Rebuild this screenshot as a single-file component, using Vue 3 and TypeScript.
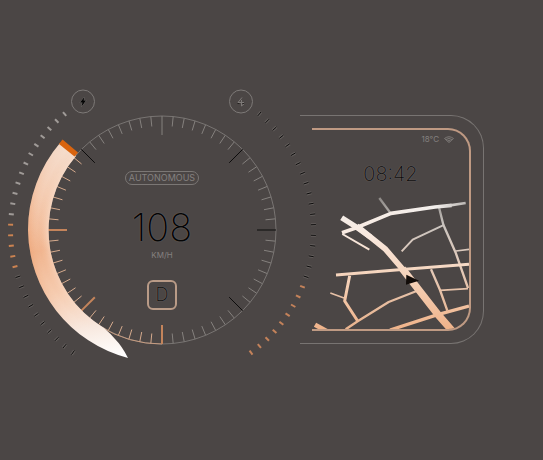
<script setup lang="ts">
interface Tick {
  x1: number
  y1: number
  x2: number
  y2: number
  tone: string
}

const CX = 162
const CY = 230

function tick(angle: number, from: number, to: number, tone: string): Tick {
  const a = (angle * Math.PI) / 180
  return {
    x1: CX + Math.cos(a) * from,
    y1: CY + Math.sin(a) * from,
    x2: CX + Math.cos(a) * to,
    y2: CY + Math.sin(a) * to,
    tone,
  }
}

// Dial scale: 64 marks, every eighth one is long. 90deg is the bottom, 180deg the left.
const dial: Tick[] = Array.from({ length: 64 }, (_, i) => {
  const angle = i * 5.625
  const major = i % 8 === 0
  const driven = angle >= 90 && angle < 222
  let tone = driven ? 'warm' : 'dim'
  if (major) tone = driven ? 'hot' : angle === 270 ? 'dim' : 'dark'
  return tick(angle, major ? 95 : 104, 114, tone)
})

const outer: Tick[] = []
for (let a = -50; a <= 54; a += 4) {
  const leftTone = a < -2 ? 'pale' : a <= 14 ? 'charge' : 'night'
  outer.push(tick(180 - a, 149, 154, leftTone))
  outer.push(tick(a, 149, 154, a >= 22 ? 'power' : 'night'))
}

const nightTicks = outer.filter((t) => t.tone === 'night')

const sweepShape =
  'M60 143A134 134 0 0 0 28 230A134 134 0 0 0 128 358Q122 346 115 339Q111 334 104 328A114 114 0 0 1 76 156Z'
</script>

<template>
  <main class="dashboard">
    <section class="gauge" aria-label="Speed">
      <svg class="dial" viewBox="0 80 324 320" aria-hidden="true">
        <defs>
          <linearGradient id="sweep" gradientUnits="userSpaceOnUse" x1="70" y1="142" x2="112" y2="358">
            <stop offset="0" stop-color="#f5dfd0" />
            <stop offset=".22" stop-color="#f5cdb3" />
            <stop offset=".46" stop-color="#f1b58f" />
            <stop offset=".66" stop-color="#f6ccb0" />
            <stop offset=".84" stop-color="#f8e8de" />
            <stop offset="1" stop-color="#ffffff" />
          </linearGradient>
          <radialGradient id="rim" gradientUnits="userSpaceOnUse" cx="162" cy="230" r="134">
            <stop offset=".85" stop-color="#fff3ea" stop-opacity=".4" />
            <stop offset=".93" stop-color="#f2b48a" stop-opacity="0" />
            <stop offset="1" stop-color="#e98f58" stop-opacity=".35" />
          </radialGradient>
          <linearGradient id="rimFade" x1="0" y1="0" x2="0" y2="1">
            <stop offset=".1" stop-color="#fff" stop-opacity=".2" />
            <stop offset=".45" stop-color="#fff" />
            <stop offset=".85" stop-color="#fff" stop-opacity="0" />
          </linearGradient>
          <mask id="rimMask">
            <rect x="20" y="130" width="120" height="235" fill="url(#rimFade)" />
          </mask>
        </defs>

        <circle class="ring" cx="162" cy="230" r="114" />
        <path class="ring-warm" d="M77 153A114 114 0 0 0 162 344" />
        <line v-for="(t, i) in dial" :key="'d' + i" :class="['mark', t.tone]" :x1="t.x1" :y1="t.y1" :x2="t.x2" :y2="t.y2" />

        <line v-for="(t, i) in nightTicks" :key="'h' + i" class="halo" :x1="t.x1" :y1="t.y1" :x2="t.x2" :y2="t.y2" />
        <line v-for="(t, i) in outer" :key="'o' + i" :class="['mark', t.tone]" :x1="t.x1" :y1="t.y1" :x2="t.x2" :y2="t.y2" />

        <path fill="url(#sweep)" :d="sweepShape" />
        <path fill="url(#rim)" mask="url(#rimMask)" :d="sweepShape" />
        <path fill="#d9640f" d="M62.500 139.500L78 152.500L74.500 156.500L59 144Z" />

        <g class="button-icon">
          <circle cx="83" cy="101.500" r="11.500" />
          <path class="bolt-halo" d="M84.500 97L80 102.500H82.500L81.500 106.500L86 100.500H83.500Z" />
          <path class="bolt" d="M84.500 97L80 102.500H82.500L81.500 106.500L86 100.500H83.500Z" />
        </g>
        <g class="button-icon">
          <circle cx="241" cy="101.500" r="11.500" />
          <path d="M242 97.500L238 102.500H244M241.500 100V106M241.500 106L244.500 103.500L243 102" />
          <path class="speck" d="M237.500 103.500H239.500M242.500 103.500H244.500" />
        </g>
      </svg>

      <div class="readout">
        <span class="mode">AUTONOMOUS</span>
        <strong class="speed">108</strong>
        <span class="unit">KM/H</span>
        <span class="gear">D</span>
      </div>
    </section>

    <section class="display" aria-label="Navigation">
      <div class="screen">
        <div class="status">
          <span>18°C</span>
          <svg class="wifi" viewBox="0 0 10 7" aria-hidden="true">
            <path d="M.500 2.500Q5 -1 9.500 2.500L5 6.500Z M2 3.500Q5 1.500 8 3.500M3.500 5Q5 4 6.500 5" />
          </svg>
        </div>
        <time class="clock">08:42</time>
        <svg class="map" viewBox="51 0 471 417" aria-hidden="true">
          <defs>
            <linearGradient id="road" gradientUnits="userSpaceOnUse" x1="0" y1="40" x2="0" y2="417">
              <stop offset="0" stop-color="#f3f0ed" />
              <stop offset=".25" stop-color="#f8e9df" />
              <stop offset=".6" stop-color="#f5d2b9" />
              <stop offset="1" stop-color="#efb38a" />
            </linearGradient>
            <linearGradient id="avenue" gradientUnits="userSpaceOnUse" x1="140" y1="0" x2="515" y2="0">
              <stop offset="0" stop-color="#f9ebe2" />
              <stop offset=".75" stop-color="#f3efec" />
              <stop offset="1" stop-color="#b9b5b2" />
            </linearGradient>
            <linearGradient id="lane" gradientUnits="userSpaceOnUse" x1="0" y1="25" x2="0" y2="417">
              <stop offset="0" stop-color="#8f8b88" />
              <stop offset=".2" stop-color="#c9c3be" />
              <stop offset=".5" stop-color="#e3cbbb" />
              <stop offset="1" stop-color="#eab48e" />
            </linearGradient>
          </defs>
          <g class="roads" stroke="url(#lane)">
            <path stroke-width="7" d="M253 24L285 67" />
            <path stroke-width="7" d="M432 52L445 104L482 188L519 294" />
            <path stroke-width="6" d="M444 106L353 149L320 184" />
            <path stroke-width="5" d="M483 183L522 178M435 301L519 296M106 309L147 324" />
            <path stroke-width="7" d="M408 238L435 300L457 362" />
            <path stroke-width="7" d="M365 303L281 336L188 394L152 418" />
          </g>
          <g class="roads" stroke="url(#road)">
            <path stroke-width="6" d="M142 132L223 179" />
            <path stroke-width="9" d="M164 257L149 333L188 393" />
            <path stroke-width="9" d="M123 255L330 238L522 223" />
            <path stroke-width="10" d="M522 348L428 374L285 420" />
            <path stroke-width="14" d="M60 404L96 424" />
            <path stroke-width="16" d="M140 83L185 112L226 141" />
            <path stroke-width="17" d="M185 108L270 176L326 241" />
            <path stroke-width="22" d="M322 236L430 375L473 424" />
          </g>
          <path class="avenue" stroke="url(#avenue)" stroke-width="11" d="M141 128L182 114L288 70L420 51L470 46" />
          <path class="avenue" stroke="url(#avenue)" stroke-width="8" d="M465 46L512 39" />
          <path fill="#120c09" d="M334 254L372 272L333 284Z" />
        </svg>
      </div>
    </section>
  </main>
</template>

<style>
body {
  margin: 0;
  background: #4b4645;
}
</style>

<style scoped>
.dashboard {
  box-sizing: border-box;
  min-height: 100vh;
  padding: 80px 59px 0 0;
  display: grid;
  grid-template-columns: 324fr 160fr;
  align-items: start;
  background: #4b4645;
  font-family: Inter, "Liberation Sans", sans-serif;
}

.gauge {
  display: grid;
  align-items: center;
  justify-items: center;
}

.dial,
.readout {
  grid-area: 1 / 1;
}

.dial {
  display: block;
  width: 100%;
}

.ring,
.ring-warm {
  fill: none;
  stroke: #787472;
  stroke-width: 1;
}

.ring-warm {
  stroke: #c79c80;
}

.mark { stroke-width: 1; }
.dim { stroke: #85817e; }
.warm { stroke: #d5aa8d; }
.hot { stroke: #c4845b; stroke-width: 2; }
.dark { stroke: #0d0c0c; stroke-width: 1; }
.pale { stroke: #a09b98; stroke-width: 2; }
.charge { stroke: #cc8351; stroke-width: 2; }
.power { stroke: #c4825a; stroke-width: 2; }
.night { stroke: #0c0b0b; stroke-width: 1; }
.halo { stroke: #625d5b; stroke-width: 3; }

.button-icon {
  fill: none;
  stroke: #7d7977;
  stroke-width: 1;
}

.button-icon .bolt { fill: #050505; stroke: none; }
.button-icon .bolt-halo { stroke: #6b6765; stroke-width: 1; }
.button-icon .speck { stroke: #242120; }

.readout {
  display: flex;
  flex-direction: column;
  align-items: center;
}

.mode {
  box-sizing: border-box;
  height: 14px;
  padding: 0 3px;
  border: 1px solid #7b7775;
  border-radius: 7px;
  color: #858180;
  font-size: 9px;
  line-height: 12px;
}

.speed {
  margin-top: 24px;
  color: #050505;
  font-size: 38px;
  font-weight: 200;
  line-height: 36px;
  text-shadow: 0 0 1px #8a8683;
}

.unit {
  margin-top: 5px;
  color: #858180;
  font-size: 8px;
  line-height: 10px;
}

.gear {
  box-sizing: border-box;
  width: 30px;
  height: 30px;
  margin-top: 20px;
  border: 2px solid #b99b87;
  border-radius: 6px;
  color: #0a0908;
  font-size: 18px;
  font-weight: 200;
  line-height: 26px;
  text-align: center;
  text-shadow: 0 0 1px #8a8683;
}

.display {
  box-sizing: border-box;
  margin: 35px 0 0 -24px;
  padding: 12px 12px 12px 12px;
  border: 1px solid #787472;
  border-left: 0;
  border-radius: 0 33px 33px 0;
}

.screen {
  overflow: hidden;
  border: 2px solid #bf9a83;
  border-left: 0;
  border-radius: 0 23px 23px 0;
}

.status {
  display: flex;
  align-items: center;
  justify-content: flex-end;
  gap: 5px;
  height: 10px;
  padding: 4px 15px 0 0;
  color: #858180;
  font-size: 8px;
  line-height: 10px;
}

.wifi {
  width: 10px;
  height: 7px;
  fill: none;
  stroke: #7d7977;
  stroke-width: 1;
}

.clock {
  display: block;
  margin-top: 20px;
  color: #0b0a0a;
  font-size: 20px;
  font-weight: 200;
  line-height: 20px;
  text-align: center;
  text-shadow: 0 0 1px #8a8683;
}

.map {
  display: block;
  width: 100%;
  margin-top: 6px;
}

.roads,
.avenue {
  fill: none;
  stroke-linejoin: round;
}
</style>
